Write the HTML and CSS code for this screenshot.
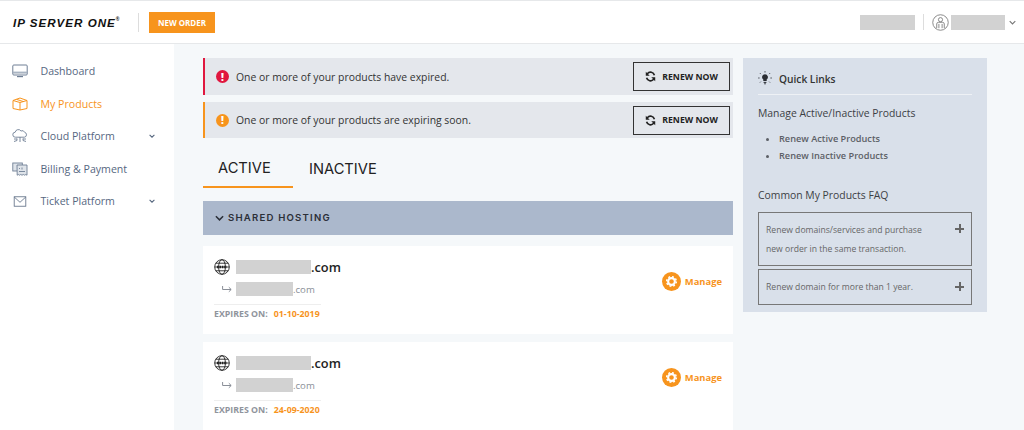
FILE: index.html
```html
<!DOCTYPE html>
<html lang="en">
<head>
<meta charset="utf-8">
<title>My Products</title>
<link rel="stylesheet" href="styles.css">
</head>
<body>
<header class="topbar">
  <div class="logo">IP SERVER ONE<sup class="reg">®</sup></div>
  <div class="vsep"></div>
  <a class="new-order">NEW ORDER</a>
  <div class="top-right">
    <span class="blur b-balance"></span>
    <span class="vsep2"></span>
    <svg class="user-ico" viewBox="0 0 18 18" width="17" height="17" fill="none" stroke="#777" stroke-width=".9"><circle cx="9" cy="9" r="8.2"/><circle cx="9" cy="6" r="2.2"/><path d="M5 15V10.5Q5 8.8 7 8.8H11Q13 8.8 13 10.5V15M7.3 15V10.5M10.7 15V10.5"/></svg>
    <span class="blur b-user"></span>
    <svg class="caret" viewBox="0 0 10 6" width="7" height="5" fill="none" stroke="#777" stroke-width="1.6"><path d="M1 1l4 4 4-4"/></svg>
  </div>
</header>
<div class="shell">
  <nav class="sidebar">
    <a class="nav-item">
      <svg class="nav-ico" viewBox="0 0 16 14" width="16" height="14" fill="none" stroke="#6f7f95" stroke-width="1"><rect x=".8" y="1" width="14.4" height="10" rx="1"/><path d="M1 8.6h14" stroke-width="2" stroke="#a9b4c2"/><path d="M5 12.6h6" stroke-width="1.2"/></svg>
      <span>Dashboard</span>
    </a>
    <a class="nav-item active">
      <svg class="nav-ico" viewBox="0 0 16 14" width="16" height="14" fill="none" stroke="#f7941d" stroke-width="1"><path d="M1 3.5L8 1l7 2.5v8L8 13l-7-1.5zM1 3.5L8 5.5l7-2M8 5.5V13M4.5 2.4l7 2.2"/></svg>
      <span>My Products</span>
    </a>
    <a class="nav-item">
      <svg class="nav-ico" viewBox="0 0 16 14" width="16" height="14" fill="none" stroke="#6f7f95" stroke-width=".9"><path d="M4 8.2H3.4a2.5 2.5 0 0 1-.2-5A3.2 3.2 0 0 1 9 2a2.6 2.6 0 0 1 3.6 1.3 2.5 2.5 0 0 1-.2 4.9H4zM8 8v5M5 9.5v2l-3 1M11 9.5v2l3 1M2 10h3M11 10h3"/></svg>
      <span>Cloud Platform</span>
      <svg class="nav-caret" viewBox="0 0 10 6" width="6" height="4" fill="none" stroke="#56677f" stroke-width="1.8"><path d="M1 1l4 4 4-4"/></svg>
    </a>
    <a class="nav-item">
      <svg class="nav-ico" viewBox="0 0 16 14" width="16" height="14" fill="#dfe4ea" stroke="#6f7f95" stroke-width=".9"><rect x=".8" y="1" width="9.5" height="8"/><path d="M5 3h10v10.2l-1.2-.7-1.2.7-1.3-.7-1.3.7-1.3-.7-1.2.7-1.2-.7-1.1.7z"/><path d="M10 5.5v2M7 6.5h1M7 9.5h6" fill="none"/></svg>
      <span>Billing &amp; Payment</span>
    </a>
    <a class="nav-item">
      <svg class="nav-ico" viewBox="0 0 16 14" width="14" height="11" fill="none" stroke="#56677f" stroke-width="1"><rect x=".6" y="1" width="14.8" height="12"/><path d="M.8 1.4L8 8l7.2-6.6"/></svg>
      <span>Ticket Platform</span>
      <svg class="nav-caret" viewBox="0 0 10 6" width="6" height="4" fill="none" stroke="#56677f" stroke-width="1.8"><path d="M1 1l4 4 4-4"/></svg>
    </a>
  </nav>
  <main class="content">
    <section class="primary">
      <div class="alert alert-red">
        <span class="alert-ico ico-red">!</span>
        <span class="alert-text">One or more of your products have expired.</span>
        <a class="renew">
          <svg viewBox="0 0 14 14" width="11" height="11" fill="none" stroke="#222" stroke-width="2.1"><path d="M12 5.4A5.2 5.2 0 0 0 3 3.4L1.8 4.8M2 8.6a5.2 5.2 0 0 0 9 2l1.2-1.4"/><path d="M1 1v5h5zM13 13V8H8z" fill="#222" stroke="none"/></svg>
          RENEW NOW
        </a>
      </div>
      <div class="alert alert-orange">
        <span class="alert-ico ico-orange">!</span>
        <span class="alert-text">One or more of your products are expiring soon.</span>
        <a class="renew">
          <svg viewBox="0 0 14 14" width="11" height="11" fill="none" stroke="#222" stroke-width="2.1"><path d="M12 5.4A5.2 5.2 0 0 0 3 3.4L1.8 4.8M2 8.6a5.2 5.2 0 0 0 9 2l1.2-1.4"/><path d="M1 1v5h5zM13 13V8H8z" fill="#222" stroke="none"/></svg>
          RENEW NOW
        </a>
      </div>
      <div class="tabs">
        <a class="tab tab-on">ACTIVE</a>
        <a class="tab">INACTIVE</a>
      </div>
      <div class="section-bar">
        <svg viewBox="0 0 10 6" width="9" height="6" fill="none" stroke="#2b2f38" stroke-width="1.7"><path d="M1 1l4 4 4-4"/></svg>
        <span class="section-name">SHARED HOSTING</span>
      </div>
      <article class="card">
        <div class="card-main">
          <div class="domain">
            <svg class="globe" viewBox="0 0 16 16" width="16" height="16" fill="none" stroke="#222" stroke-width=".9"><circle cx="8" cy="8" r="7.3"/><ellipse cx="8" cy="8" rx="3.4" ry="7.3"/><path d="M1.8 4.2h12.4M1.8 11.8h12.4M.8 8h14.4" /><path d="M3 8h10" stroke-width="2.4" stroke-dasharray="1.6 .8"/></svg>
            <span class="blur b-domain"></span><span class="tld">.com</span>
          </div>
          <div class="sub">
            <svg class="sub-arrow" viewBox="0 0 10 7" width="10" height="7" fill="none" stroke="#8a8f98" stroke-width="1"><path d="M.6 0v3.5H9M6.8 1.2L9.2 3.5 6.8 5.8"/></svg>
            <span class="blur b-sub"></span><span class="sub-tld">.com</span>
          </div>
          <div class="expires"><span class="exp-label">EXPIRES ON:</span><span class="exp-date">01-10-2019</span></div>
        </div>
        <a class="manage">
          <svg viewBox="0 0 18 18" width="19" height="19"><circle cx="9" cy="9" r="9" fill="#f7941d"/><circle cx="9" cy="9" r="3.2" fill="none" stroke="#fff" stroke-width="2"/><circle cx="9" cy="9" r="4.6" fill="none" stroke="#fff" stroke-width="1.4" stroke-dasharray="1.8 1.8"/></svg>
          Manage
        </a>
      </article>
      <article class="card">
        <div class="card-main">
          <div class="domain">
            <svg class="globe" viewBox="0 0 16 16" width="16" height="16" fill="none" stroke="#222" stroke-width=".9"><circle cx="8" cy="8" r="7.3"/><ellipse cx="8" cy="8" rx="3.4" ry="7.3"/><path d="M1.8 4.2h12.4M1.8 11.8h12.4M.8 8h14.4" /><path d="M3 8h10" stroke-width="2.4" stroke-dasharray="1.6 .8"/></svg>
            <span class="blur b-domain"></span><span class="tld">.com</span>
          </div>
          <div class="sub">
            <svg class="sub-arrow" viewBox="0 0 10 7" width="10" height="7" fill="none" stroke="#8a8f98" stroke-width="1"><path d="M.6 0v3.5H9M6.8 1.2L9.2 3.5 6.8 5.8"/></svg>
            <span class="blur b-sub"></span><span class="sub-tld">.com</span>
          </div>
          <div class="expires"><span class="exp-label">EXPIRES ON:</span><span class="exp-date">24-09-2020</span></div>
        </div>
        <a class="manage">
          <svg viewBox="0 0 18 18" width="19" height="19"><circle cx="9" cy="9" r="9" fill="#f7941d"/><circle cx="9" cy="9" r="3.2" fill="none" stroke="#fff" stroke-width="2"/><circle cx="9" cy="9" r="4.6" fill="none" stroke="#fff" stroke-width="1.4" stroke-dasharray="1.8 1.8"/></svg>
          Manage
        </a>
      </article>
    </section>
    <aside class="quick">
      <div class="quick-head">
        <svg viewBox="0 0 14 14" width="14" height="14" fill="#2a2d33" stroke="#2a2d33"><path d="M7 3.2a3 3 0 0 0-1.7 5.4V10h3.4V8.6A3 3 0 0 0 7 3.2z" stroke="none"/><path d="M5.6 11.4h2.8M6.2 12.8h1.6" stroke-width="1"/><path d="M7 0v1.6M1.8 2l1.1 1.1M12.2 2l-1.1 1.1M0 7h1.7M12.3 7H14M1.9 11.6l1-1M12.1 11.6l-1-1" stroke-width=".7"/></svg>
        <span>Quick Links</span>
      </div>
      <h3 class="quick-title">Manage Active/Inactive Products</h3>
      <ul class="quick-list">
        <li>Renew Active Products</li>
        <li>Renew Inactive Products</li>
      </ul>
      <h3 class="quick-title faq-title">Common My Products FAQ</h3>
      <div class="faq">
        <span class="faq-text">Renew domains/services and purchase new order in the same transaction.</span>
        <span class="faq-plus"></span>
      </div>
      <div class="faq faq-short">
        <span class="faq-text">Renew domain for more than 1 year.</span>
        <span class="faq-plus"></span>
      </div>
    </aside>
  </main>
</div>
</body>
</html>
```
FILE: styles.css
```css
* { box-sizing: border-box; }
html, body { margin: 0; height: 430px; overflow: hidden; }
body { font-family: "Open Sans", "Noto Sans", sans-serif; background: #f5f8fa; color: #333; }
a { color: inherit; text-decoration: none; }

.topbar { height: 44px; background: #fff; border-top: 1px solid #e6e8ea; border-bottom: 1px solid #e6e8ea; display: flex; align-items: center; padding-left: 13px; padding-right: 8px; }
.logo { width: 108px; font-family: "Liberation Sans", sans-serif; font-weight: 700; font-style: italic; font-size: 11.6px; letter-spacing: 1px; color: #111; white-space: nowrap; display: flex; }
.reg { font-size: 5px; line-height: 6px; font-style: normal; letter-spacing: 0; }
.vsep { width: 1px; height: 19px; background: #ddd; margin-left: 17px; }
.new-order { margin-left: 10px; width: 66px; height: 21px; background: #f7941d; color: #fff; font-size: 8px; font-weight: 700; display: flex; align-items: center; justify-content: center; }
.top-right { margin-left: auto; display: flex; align-items: center; }
.blur { display: inline-block; background: #d2d2d2; flex: none; }
.b-balance { width: 55px; height: 15px; }
.vsep2 { width: 1px; height: 16px; background: #ddd; margin: 0 8px 0 8px; }
.user-ico { margin-right: 2px; }
.b-user { width: 54px; height: 15px; }
.caret { margin-left: 4px; }

.shell { display: flex; height: 386px; }
.sidebar { width: 174px; background: #fff; padding-top: 11px; flex: none; }
.nav-item { position: relative; height: 32.5px; display: flex; align-items: center; padding-left: 12px; font-size: 10.6px; color: #56677f; }
.nav-item span { margin-left: 12.5px; }
.nav-item.active { color: #f7941d; }
.nav-ico { flex: none; width: 16px; }
.nav-caret { position: absolute; left: 149px; top: 14px; }

.content { flex: 1; display: flex; align-items: flex-start; padding: 14px 0 0 29px; gap: 10px; }
.primary { width: 530px; flex: none; }

.alert { height: 37px; background: #e4e7ec; display: flex; align-items: center; padding: 0 3px 0 11px; margin-bottom: 7px; border-left: 2px solid; color: #333; }
.alert-red { border-left-color: #e0173f; }
.alert-orange { border-left-color: #f7941d; height: 36px; }
.alert-ico { width: 13px; height: 13px; border-radius: 50%; color: #fff; font-size: 10px; font-weight: 800; display: flex; align-items: center; justify-content: center; flex: none; }
.ico-red { background: #e0173f; }
.ico-orange { background: #f7941d; }
.alert-text { margin-left: 7px; font-size: 10.4px; }
.renew { margin-left: auto; width: 97px; height: 29px; border: 1px solid #333; display: flex; align-items: center; justify-content: center; gap: 6px; font-size: 8.7px; font-weight: 700; color: #222; }

.tabs { display: flex; margin-top: 7px; height: 43px; }
.tab { width: 90px; height: 43px; display: flex; align-items: center; padding: 5px 0 0 15px; font-family: "Inter", sans-serif; font-size: 14.7px; font-weight: 400; color: #222; }
.tab:last-child { width: 98px; padding-left: 16px; }
.tab-on { border-bottom: 2px solid #f7941d; }

.section-bar { margin-top: 13px; height: 34px; background: #abb8cc; display: flex; align-items: center; gap: 4px; padding-left: 12px; font-family: "Inter", sans-serif; font-size: 9.6px; font-weight: 600; letter-spacing: 1.2px; color: #2b2f38; }
.section-name { margin-top: -1px; }

.card { margin-top: 11px; height: 88px; background: #fff; display: flex; justify-content: space-between; align-items: center; padding: 0 11px; }
.card + .card { margin-top: 8px; }
.card-main { width: 107px; height: 88px; padding-top: 13px; }
.domain { display: flex; align-items: center; height: 16px; white-space: nowrap; }
.globe { flex: none; margin-right: 6px; }
.b-domain { width: 75px; height: 14px; }
.tld { font-size: 12.8px; font-weight: 600; color: #222; }
.sub { display: flex; align-items: center; height: 14px; margin-top: 7px; white-space: nowrap; }
.sub-arrow { margin-left: 8px; margin-right: 4px; flex: none; }
.b-sub { width: 57px; height: 14px; }
.sub-tld { font-size: 9.6px; color: #8a8f98; }
.expires { margin-top: 8px; border-top: 1px solid #eee; padding-top: 3px; white-space: nowrap; font-size: 8.8px; font-weight: 700; }
.exp-label { color: #8f949c; }
.exp-date { margin-left: 6px; color: #f7941d; }
.manage { display: flex; align-items: center; gap: 4px; font-size: 9.4px; font-weight: 700; color: #f7941d; margin-top: -17px; }

.quick { width: 244px; height: 254px; background: #d9e0ea; padding: 0 15px; flex: none; }
.quick-head { height: 37px; display: flex; align-items: center; gap: 7px; border-bottom: 1px solid #eef1f5; font-size: 10.2px; font-weight: 600; color: #333; padding-top: 5px; }
.quick-head svg { margin-top: -2px; }
.quick-title { margin: 0; font-size: 10.4px; font-weight: 400; color: #3c3f45; line-height: 14px; }
.quick-head + .quick-title { margin-top: 11px; }
.quick-list { margin: 10px 0 0; padding: 0 0 0 21px; font-size: 9.2px; font-weight: 600; color: #5c5f66; line-height: 17px; }
.faq-title { margin-top: 24px; }
.faq { position: relative; margin-top: 10px; height: 54px; border: 1px solid #777; padding: 8px 40px 0 7px; font-size: 8.6px; line-height: 19px; color: #666; }
.faq-short { margin-top: 3px; height: 36px; padding-top: 8px; }
.faq-plus { position: absolute; right: 7px; top: 11px; width: 9px; height: 9px; background: linear-gradient(#666, #666) center / 100% 2px no-repeat, linear-gradient(#666, #666) center / 2px 100% no-repeat; }
.faq-short .faq-plus { top: 12px; }
```
